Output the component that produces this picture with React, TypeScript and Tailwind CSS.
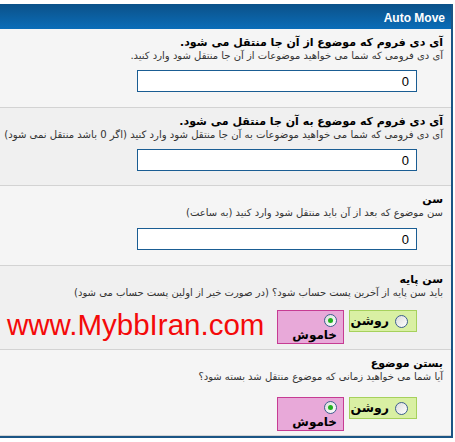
import React from "react";

const fa = { fontFamily: '"DejaVu Sans", Tahoma, sans-serif' };

function Radio({ checked }: { checked?: boolean }) {
  return (
    <span className="relative inline-flex h-[13px] w-[13px] shrink-0 items-center justify-center rounded-full border border-[#3d5f8f] bg-gradient-to-br from-[#dcdcdc] to-[#ffffff]">
      {checked && <span className="h-[5px] w-[5px] rounded-full bg-[#21b021]" />}
    </span>
  );
}

function OnOff() {
  return (
    <div className="flex items-start gap-[5px] pr-[26px]">
      <div className="flex h-[22px] w-[68px] items-center gap-[6px] border border-[#a6d15c] bg-[#d9f0a3] pr-[8px]">
        <Radio />
        <span className="text-[12.5px] font-bold leading-none text-black" style={fa}>روشن</span>
      </div>
      <div className="flex h-[34px] w-[67px] flex-col items-start border border-[#c63c93] bg-[#e8a9d9] pt-[3px] pr-[6px]">
        <Radio checked />
        <span className="mt-[1px] text-[12px] font-bold leading-[14px] text-black" style={fa}>خاموش</span>
      </div>
    </div>
  );
}

function NumberBox() {
  return (
    <div className="flex pr-[26px]">
      <div className="flex h-[22px] w-[280px] items-center border border-[#1a5d93] bg-white pr-[7px]">
        <span className="text-[13px] leading-none text-black" style={{ fontFamily: '"Liberation Sans", Arial, sans-serif' }}>0</span>
      </div>
    </div>
  );
}

function Row({
  title,
  desc,
  bg,
  h,
  gap,
  descSize = "text-[10px]",
  children,
}: {
  title: string;
  desc: string;
  bg: string;
  h: string;
  gap: string;
  descSize?: string;
  children: React.ReactNode;
}) {
  return (
    <div dir="rtl" className={`${bg} ${h} border-b border-[#d3d3d3] pt-[7px] pr-[8px]`}>
      <div className="text-[11px] font-bold leading-[14px] text-black whitespace-nowrap" style={fa}>{title}</div>
      <div className={`${descSize} leading-[12px] text-[#333333] whitespace-nowrap`} style={fa}>{desc}</div>
      <div className={gap}>{children}</div>
    </div>
  );
}

export default function App() {
  return (
    <div className="relative h-[442px] w-[455px] overflow-hidden bg-white pt-[4px]">
      <div className="w-[453px] border-r-2 border-b-2 border-[#1b5585]">
        <div className="flex h-[25px] items-center justify-end bg-gradient-to-b from-[#0b5189] to-[#0a6db8] pr-[6px] pt-[3px]">
          <span className="text-[12px] font-bold text-white" style={{ fontFamily: '"Liberation Sans", Arial, sans-serif' }}>
            Auto Move
          </span>
        </div>

        <Row
          bg="bg-[#f5f5f5]"
          h="h-[79px]"
          gap="mt-[8px]"
          title="آی دی فروم که موضوع از آن جا منتقل می شود."
          desc="آی دی فرومی که شما می خواهید موضوعات از آن جا منتقل شود وارد کنید."
        >
          <NumberBox />
        </Row>

        <Row
          bg="bg-[#f0f0f0]"
          h="h-[78px]"
          gap="mt-[8px]"
          descSize="text-[10.1px]"
          title="آی دی فروم که موضوع به آن جا منتقل می شود."
          desc="آی دی فرومی که شما می خواهید موضوعات به آن جا منتقل شود وارد کنید (اگر 0 باشد منتقل نمی شود)"
        >
          <NumberBox />
        </Row>

        <Row
          bg="bg-[#f5f5f5]"
          h="h-[80px]"
          gap="mt-[9px]"
          title="سن"
          desc="سن موضوع که بعد از آن باید منتقل شود وارد کنید (به ساعت)"
        >
          <NumberBox />
        </Row>

        <Row
          bg="bg-[#f0f0f0]"
          h="h-[84px]"
          gap="mt-[11px]"
          title="سن پایه"
          desc="باید سن پایه از آخرین پست حساب شود؟ (در صورت خیر از اولین پست حساب می شود)"
        >
          <OnOff />
        </Row>

        <Row
          bg="bg-[#f5f5f5]"
          h="h-[86px]"
          gap="mt-[14px]"
          title="بستن موضوع"
          desc="آیا شما می خواهید زمانی که موضوع منتقل شد بسته شود؟"
        >
          <OnOff />
        </Row>
      </div>

      <span
        className="absolute left-[7px] top-[307px] text-[29.5px] leading-[36px] text-[#f40a0a]"
        style={{ fontFamily: '"Liberation Sans", Arial, sans-serif' }}
      >
        www.MybbIran.com
      </span>
    </div>
  );
}
